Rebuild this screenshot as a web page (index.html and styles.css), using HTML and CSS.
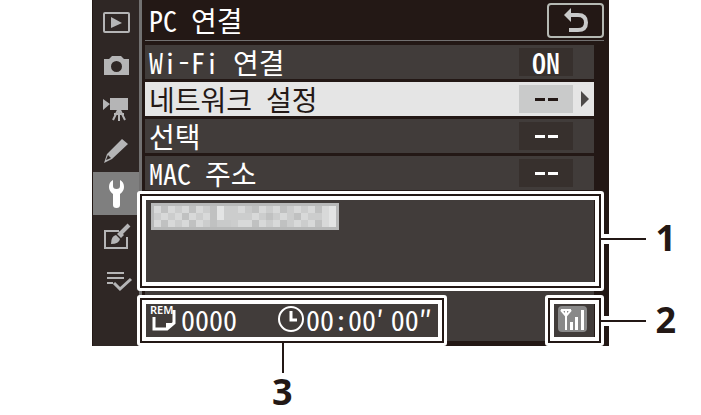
FILE: index.html
```html
<!DOCTYPE html>
<html lang="ko">
<head>
	<meta charset="utf-8">
	<title>PC 연결</title>
	<link rel="stylesheet" href="styles.css">
</head>
<body>

	<div class="figure">
		<div class="screen">
			<nav class="tabs">
				<button class="tab" aria-label="재생">
					<svg width="28" height="28" viewBox="0 0 28 28"><rect x="2" y="5" width="25" height="19" rx="1" fill="none" stroke="#b5b5b6" stroke-width="2"/><path d="M9 9v11l11-5z" fill="#b5b5b6"/></svg>
				</button>
				<button class="tab" aria-label="촬영">
					<svg width="28" height="28" viewBox="0 0 28 28"><path fill="#b5b5b6" fill-rule="evenodd" d="M2 8h5l3-3h9l3 3h5v16H2zM14.500 10a5.500 5.500 0 1 0 0 11 5.500 5.500 0 0 0 0-11z"/></svg>
				</button>
				<button class="tab" aria-label="동영상">
					<svg width="28" height="28" viewBox="0 0 28 28"><path fill="#b5b5b6" d="M1 5l7 5-7 6zM8 4h18v12H8z"/><path d="M17 15v12M16 16l-5 10M18 16l5 10M12 20h10" fill="none" stroke="#b5b5b6" stroke-width="2"/></svg>
				</button>
				<button class="tab" aria-label="사용자 설정">
					<svg width="28" height="28" viewBox="0 0 28 28"><path fill="#b5b5b6" fill-rule="evenodd" d="M20 2l6 5-16 15-8 4 3-9zM6 18l-2 5 5-2z"/></svg>
				</button>
				<button class="tab active" aria-label="설정">
					<svg width="28" height="32" viewBox="0 0 28 32"><path fill="#fff" d="M11 2v6q0 3 3.500 3T18 8V2q4 2 4 7 0 4-4 7V27q0 3-3.500 3T11 27V16Q7 13 7 9q0-5 4-7z"/></svg>
				</button>
				<button class="tab" aria-label="수정">
					<svg width="28" height="28" viewBox="0 0 28 28"><path d="M17 8H3v17h22V14" fill="none" stroke="#b5b5b6" stroke-width="2"/><path d="M27 2l-8 8" stroke="#b5b5b6" stroke-width="4"/><path d="M18 8l4 4-3 3-4-4z" fill="#b5b5b6"/><path d="M14 12l4 4q-1 5-9 5 0-8 5-9z" fill="#b5b5b6"/></svg>
				</button>
				<button class="tab" aria-label="나의 메뉴">
					<svg width="28" height="28" viewBox="0 0 28 28"><path d="M5 7h17M5 12h17M5 17h6" stroke="#b5b5b6" stroke-width="2"/><path d="M12 17l6 6L29 13" fill="none" stroke="#b5b5b6" stroke-width="3"/></svg>
				</button>
			</nav>

			<div class="main">
				<div class="header">
					<h1 class="title">PC 연결</h1>
					<button class="back" aria-label="뒤로">
						<svg width="26" height="26" viewBox="0 0 26 26"><path d="M1 8l7-7v14z" fill="#c9caca"/><path d="M7 8h8q8 0 8 7.500T15 23H6" fill="none" stroke="#c9caca" stroke-width="4"/></svg>
					</button>
				</div>

				<div class="menu">
					<button class="item"><span>Wi-Fi 연결</span><span class="value">ON</span></button>
					<button class="item selected"><span>네트워크 설정</span><span class="value"><i class="dash"></i><i class="dash"></i></span></button>
					<button class="item"><span>선택</span><span class="value"><i class="dash"></i><i class="dash"></i></span></button>
					<button class="item"><span>MAC 주소</span><span class="value"><i class="dash"></i><i class="dash"></i></span></button>
				</div>

				<div class="info">
					<div class="mosaic" id="mosaic"></div>
				</div>

				<div class="status">
					<svg class="rem" width="28" height="28" viewBox="0 0 28 28"><text x="0" y="9" class="rem-text">REM</text><path d="M4 12v12h13l7-6V5" fill="none" stroke="#fff" stroke-width="3"/><path d="M16 25v-7h9z" fill="#fff"/></svg>
					<span class="count">0000</span>
					<svg class="clock" width="26" height="26" viewBox="0 0 26 26"><circle cx="13" cy="13" r="12" fill="none" stroke="#fff" stroke-width="2"/><path d="M13 5v9h6" fill="none" stroke="#fff" stroke-width="3"/></svg>
					<span class="time"><span>00:00′</span><span>00″</span></span>
					<svg class="signal" width="30" height="26" viewBox="0 0 30 26"><rect width="29" height="26" rx="4" fill="#898989"/><path d="M3 4h10M3 4l5 6 5-6M8 4v20" fill="none" stroke="#fff" stroke-width="2"/><path d="M12 16h3v8h-3zM17 11h3v13h-3zM23 4h3v20h-3z" fill="#fff"/></svg>
				</div>
			</div>

			<!-- callouts -->
			<div class="callout callout-info"></div>
			<div class="callout callout-signal"></div>
			<div class="callout callout-rem"></div>
			<div class="leader leader-info"></div>
			<div class="leader leader-signal"></div>
			<div class="leader-rem"></div>
			<span class="num num-info">1</span>
			<span class="num num-signal">2</span>
			<span class="num num-rem">3</span>
		</div>
	</div>

<script src="script.js"></script>
</body>
</html>
```
FILE: styles.css
```css
* {
	box-sizing: border-box;
}
body {
	margin: 0;
	background-color: #fff;
	color: #fff;
	font-family: "Noto Sans CJK KR", sans-serif;
	font-size: 28px;
	line-height: 34px;
	font-feature-settings: "hwid";
}
button {
	padding: 0;
	border: 0;
	background: none;
	color: inherit;
	font: inherit;
	font-feature-settings: inherit;
}
svg {
	display: block;
	flex: none;
	overflow: visible;
}
.figure {
	padding: 0 92px 69px;
}
.screen {
	position: relative;
	display: flex;
	background-color: #231815;
}
.tabs {
	display: flex;
	flex-direction: column;
	width: 50px;
	border-left: 1px solid #231815;
	border-right: 3px solid #727171;
	background-color: #2f2725;
}
.tab {
	display: flex;
	align-items: center;
	justify-content: center;
	height: 43px;
}
.tab.active {
	background-color: #7f7f7f;
}
.main {
	flex: 1;
	padding: 0 15px 5px 3px;
}
.header {
	display: flex;
	align-items: center;
	justify-content: space-between;
	height: 41px;
	margin-right: -10px;
	padding-left: 4px;
	border-bottom: 1px solid #727171;
}
.title {
	margin: 0;
	font-size: 28px;
	font-weight: normal;
}
.back {
	display: flex;
	align-items: center;
	justify-content: center;
	width: 57px;
	height: 35px;
	border: 2px solid #b5b9b3;
	border-radius: 4px;
}
.menu {
	display: flex;
	flex-direction: column;
	gap: 3px;
	padding: 4px 0 3px;
}
.item {
	position: relative;
	display: flex;
	align-items: center;
	justify-content: space-between;
	height: 34px;
	padding: 0 21px 0 4px;
	background-color: #413c3a;
	text-align: left;
}
.value {
	display: flex;
	align-items: center;
	justify-content: center;
	gap: 3px;
	width: 54px;
	height: 28px;
	background-color: #37302d;
	font-weight: 500;
}
.dash {
	width: 10px;
	height: 3px;
	background-color: currentColor;
}
.selected {
	background-color: #e5e5e5;
	color: #231815;
}
.selected .value {
	background-color: #c9caca;
}
.selected::after {
	content: "";
	position: absolute;
	right: 5px;
	border: 8px solid transparent;
	border-left-color: #4c4948;
	border-right: 0;
}
.info {
	height: 94px;
	padding: 10px 6px;
	background-color: #413c3a;
}
.mosaic {
	display: grid;
	grid-template-columns: repeat(26, 7px);
	grid-auto-rows: 7px;
	width: 188px;
	padding: 3px;
	background-color: #b8b9b9;
}
.status {
	display: flex;
	align-items: center;
	height: 52px;
	margin-top: 2px;
	padding: 8px 6px 0 5px;
	background-color: #413c3a;
}
.rem-text {
	fill: #fff;
	font-family: "Noto Sans", sans-serif;
	font-size: 11px;
	font-weight: 600;
}
.count {
	margin-left: 3px;
}
.clock {
	margin-left: 41px;
}
.time {
	display: flex;
	gap: 7px;
	margin-left: 2px;
}
.signal {
	margin-left: auto;
}
.callout {
	position: absolute;
	border: 2px solid #231815;
	box-shadow: inset 0 0 0 4px #fff;
}
/* rounded white halo around the frame */
.callout::before {
	content: "";
	position: absolute;
	inset: -5px;
	border: 3px solid #fff;
	border-radius: 3px;
}
.callout-info {
	top: 194px;
	left: 48px;
	right: 8px;
	height: 94px;
}
.callout-signal {
	top: 298px;
	right: 8px;
	width: 53px;
	height: 45px;
}
.callout-rem {
	top: 298px;
	left: 48px;
	width: 304px;
	height: 45px;
}
.leader {
	position: absolute;
	right: -37px;
	width: 45px;
	height: 10px;
	border: 4px solid #fff;
	border-width: 4px 0;
	background-color: #231815;
}
.leader-info {
	top: 234px;
}
.leader-signal {
	top: 316px;
}
.leader-rem {
	position: absolute;
	top: 342px;
	left: 190px;
	width: 2px;
	height: 31px;
	background-color: #231815;
}
.num {
	position: absolute;
	color: #231815;
	font-family: "Open Sans", sans-serif;
	font-size: 36px;
	font-weight: bold;
	line-height: 36px;
}
.num-info {
	top: 220px;
	right: -67px;
}
.num-signal {
	top: 302px;
	right: -67px;
}
.num-rem {
	top: 374px;
	left: 180px;
}
```
FILE: script.js
```js
var mosaic = document.getElementById('mosaic');
var rows = [
	'31323132142235132312323134',
	'23231323142222321232132234',
	'31323132155233132312323134'
];
var shades = ['#b5b5b6', '#c0c1c1', '#cccdcd', '#d8d9d9', '#e3e4e4', '#c9caca'];

rows.join('').split('').forEach(function(n){
	var cell = document.createElement('span');
	cell.style.backgroundColor = shades[n];
	mosaic.appendChild(cell);
});
```
